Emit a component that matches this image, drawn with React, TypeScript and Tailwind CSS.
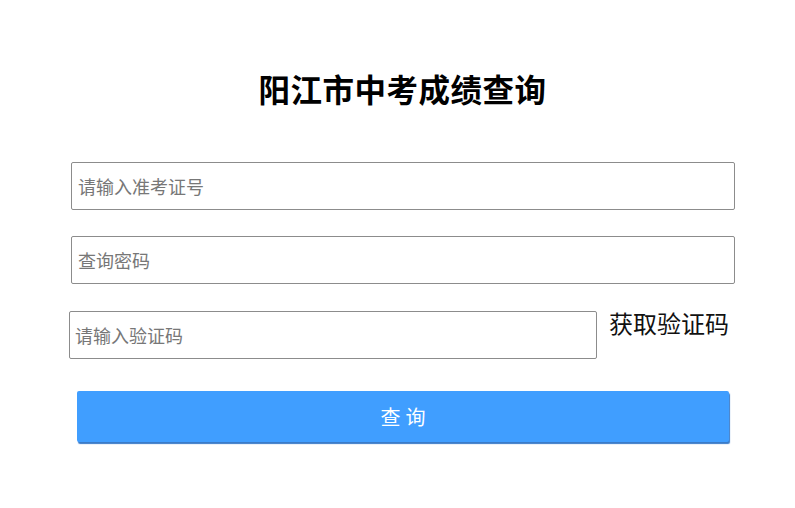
import React from "react";

export default function App() {
  const font = { fontFamily: '"Noto Sans CJK SC", "Noto Sans", sans-serif' };
  return (
    <div className="w-[795px] h-[508px] bg-white overflow-hidden" style={font}>
      <div className="pt-[64px] h-[112px] text-center pl-[10px]">
        <h1 className="text-[31.5px] leading-[48px] font-bold text-black tracking-[0.5px]">阳江市中考成绩查询</h1>
      </div>
      <div className="mt-[50px] ml-[71px] w-[664px] h-[48px] border border-[#8c8c8c] rounded-[2px] flex items-center pl-[6px]">
        <span className="text-[18px] text-[#777]">请输入准考证号</span>
      </div>
      <div className="mt-[26px] ml-[71px] w-[664px] h-[48px] border border-[#8c8c8c] rounded-[2px] flex items-center pl-[6px]">
        <span className="text-[18px] text-[#777]">查询密码</span>
      </div>
      <div className="mt-[27px] flex items-start">
        <div className="ml-[69px] w-[528px] h-[48px] border border-[#8c8c8c] rounded-[2px] flex items-center pl-[5px]">
          <span className="text-[18px] text-[#777]">请输入验证码</span>
        </div>
        <span className="ml-[12px] mt-[-4px] text-[24px] leading-[32px] text-[#111]">获取验证码</span>
      </div>
      <div className="mt-[32px] ml-[77px] w-[652px] h-[51px] bg-[#409eff] rounded-[2px] shadow-[1px_2px_1px_#3a7bc8] flex items-center justify-center">
        <span className="text-[20px] text-white tracking-[5px] pl-[5px]">查询</span>
      </div>
    </div>
  );
}
